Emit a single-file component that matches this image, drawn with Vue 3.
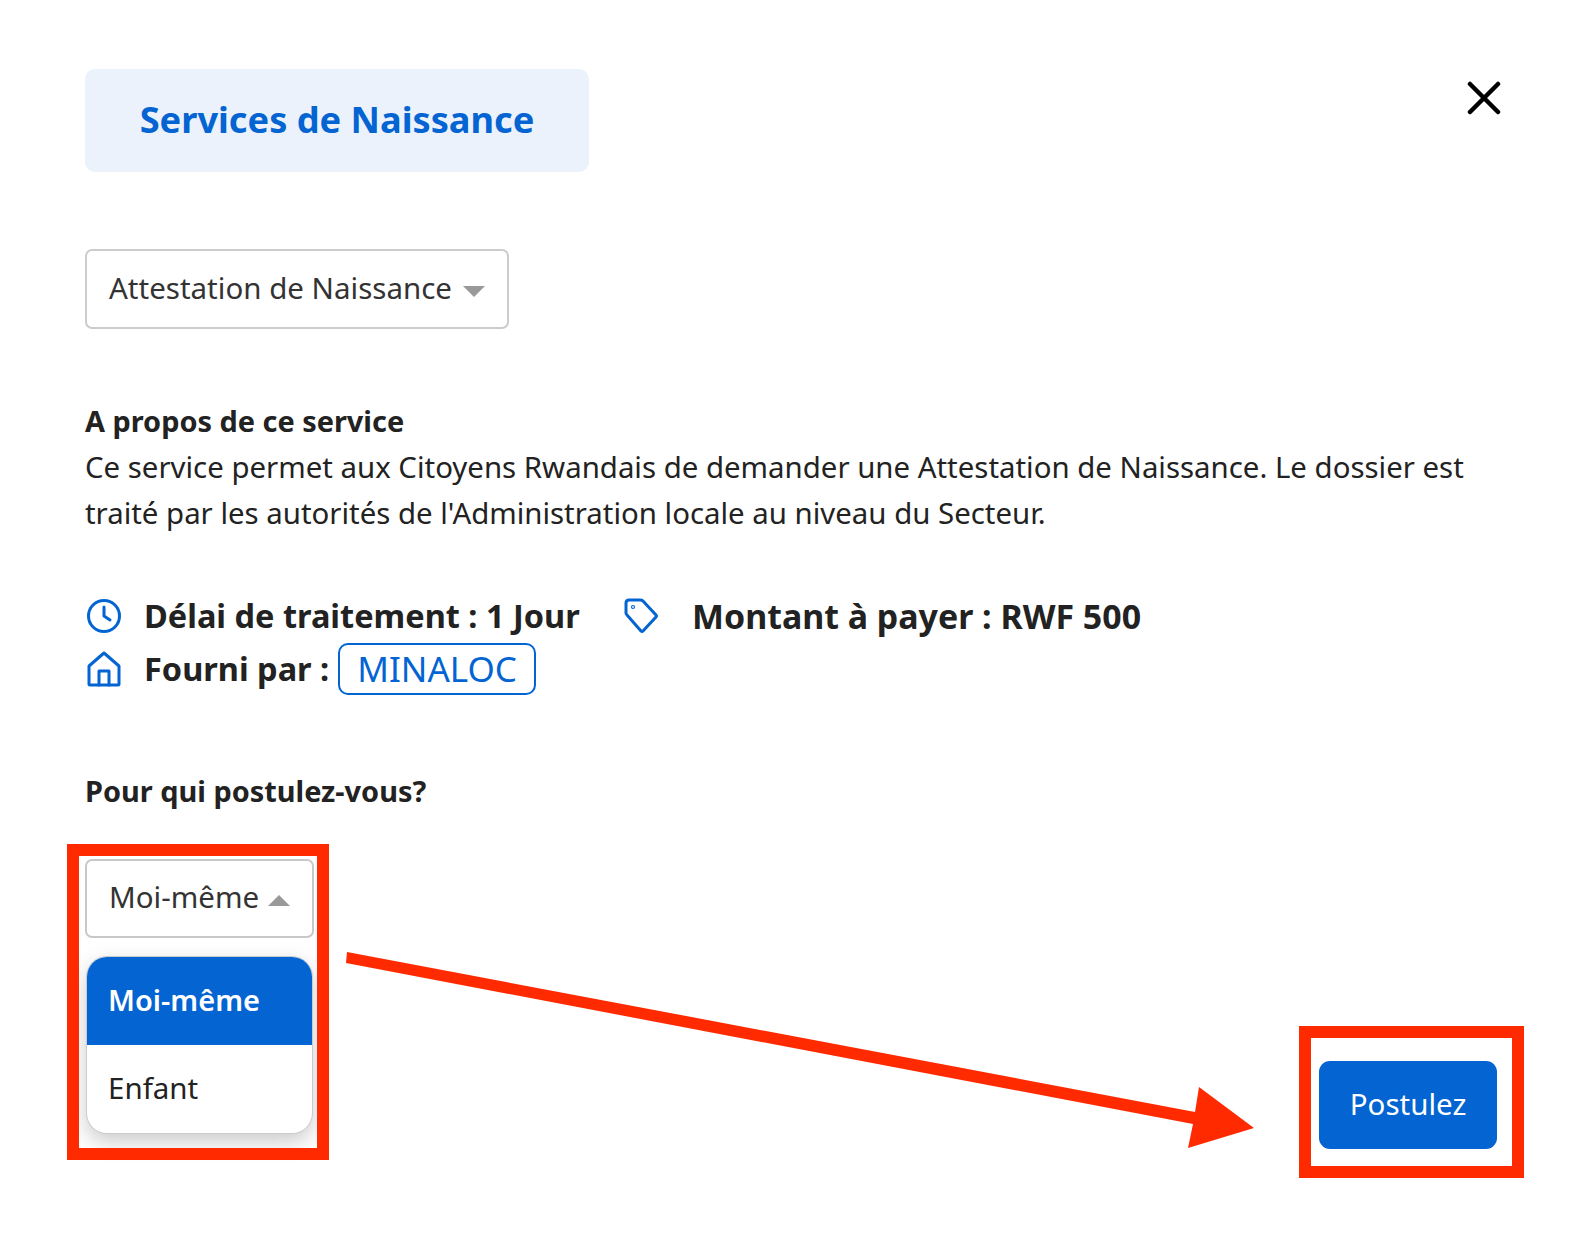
<script setup>
const options = [
  { label: 'Moi-même', active: true },
  { label: 'Enfant', active: false }
]
</script>

<template>
  <main class="modal">
    <header class="top">
      <h1 class="title">Services de Naissance</h1>
      <button class="close" aria-label="Fermer">
        <svg width="34" height="34" viewBox="0 0 34 34">
          <path d="M3 3 L31 31 M31 3 L3 31" stroke="#000" stroke-width="4.5" stroke-linecap="round" />
        </svg>
      </button>
    </header>

    <div class="select service">
      <span>Attestation de Naissance</span>
      <i class="caret down"></i>
    </div>

    <section class="about">
      <h2>A propos de ce service</h2>
      <p>Ce service permet aux Citoyens Rwandais de demander une Attestation de Naissance. Le dossier est traité par les autorités de l'Administration locale au niveau du Secteur.</p>
    </section>

    <section class="meta">
      <div class="meta-row">
        <svg class="ico" viewBox="0 0 36 36" fill="none" stroke="#0364d2" stroke-width="3" stroke-linecap="round" stroke-linejoin="round">
          <circle cx="18" cy="18" r="15.5" />
          <path d="M18 9 V18 L24 22" />
        </svg>
        <span class="meta-text first">Délai de traitement : 1 Jour</span>
        <svg class="ico tag" viewBox="0 0 36 36" fill="none" stroke="#0364d2" stroke-width="3" stroke-linecap="round" stroke-linejoin="round">
          <path d="M3 5 Q3 2 6 2 H17 Q19 2 20 3 L33 17 Q34 18 33 19 L20 33 Q19 34 18 33 L4 17 Q3 16 3 15 Z" />
          <circle cx="10" cy="9" r="0.6" />
        </svg>
        <span class="meta-text amount">Montant à payer : RWF 500</span>
      </div>
      <div class="meta-row">
        <svg class="ico" viewBox="0 0 36 36" fill="none" stroke="#0364d2" stroke-width="3" stroke-linecap="round" stroke-linejoin="round">
          <path d="M3 15 L18 2 L33 15 V33 Q33 34 32 34 H4 Q3 34 3 33 Z" />
          <path d="M13 34 V20 H23 V34" />
        </svg>
        <span class="meta-text">Fourni par :</span>
        <span class="chip">MINALOC</span>
      </div>
    </section>

    <h2 class="question">Pour qui postulez-vous?</h2>

    <div class="bottom">
      <div class="picker">
        <div class="select who">
          <span>Moi-même</span>
          <i class="caret up"></i>
        </div>
        <ul class="menu">
          <li v-for="o in options" :key="o.label" :class="{ active: o.active }">{{ o.label }}</li>
        </ul>
        <div class="mark mark-left"></div>
      </div>
      <div class="submit">
        <button class="apply">Postulez</button>
        <div class="mark mark-right"></div>
      </div>
    </div>

    <svg class="arrow" width="1596" height="1255" viewBox="0 0 1596 1255">
      <path d="M347 952 L1195 1112 L1199 1087 L1254 1128 L1188 1148 L1193 1124 L346 963 Z" fill="#ff2a00" />
    </svg>
  </main>
</template>

<style>
html, body { background: #fff; }
</style>

<style scoped>
.modal {
  position: relative;
  width: 1596px;
  height: 1255px;
  box-sizing: border-box;
  padding: 69px 99px 0 85px;
  font-family: "Noto Sans", "Open Sans", sans-serif;
  color: #222;
  overflow: hidden;
}

.top {
  display: flex;
  justify-content: space-between;
  align-items: flex-start;
}

.title {
  margin: 0;
  width: 504px;
  height: 103px;
  line-height: 100px;
  text-align: center;
  background: #ebf2fc;
  border-radius: 10px;
  color: #0364d2;
  font-size: 36.2px;
  font-weight: 700;
}

.close {
  margin: 12px -4px 0 0;
  padding: 0;
  border: 0;
  background: none;
  width: 34px;
  height: 34px;
}

.select {
  display: flex;
  align-items: center;
  box-sizing: border-box;
  height: 80px;
  padding: 0 22px 4px;
  border: 2px solid #ccc;
  border-radius: 7px;
  font-size: 29.5px;
  color: #333;
  background: #fff;
}

.service {
  margin-top: 77px;
  width: 424px;
  justify-content: space-between;
}

.caret {
  width: 0;
  height: 0;
  border-left: 11px solid transparent;
  border-right: 11px solid transparent;
}

.caret.down { border-top: 11px solid #999; margin-top: 8px; }
.caret.up { border-bottom: 11px solid #999; margin-top: 8px; }

.about {
  margin-top: 69px;
  font-size: 29.4px;
}

.about h2,
.question {
  margin: 0;
  font-size: 28.9px;
  line-height: 46px;
  font-weight: 700;
}

.about p {
  margin: 0;
  line-height: 46px;
  max-width: 1400px;
}

.meta {
  margin-top: 53px;
}

.meta-row {
  display: flex;
  align-items: center;
  height: 53px;
}

.ico {
  width: 36px;
  height: 36px;
  flex: none;
  margin-left: 1px;
}

.meta-text {
  margin-left: 22px;
  font-size: 32.5px;
  font-weight: 700;
  white-space: nowrap;
}

.amount {
  margin-left: 33px;
  font-size: 33.9px;
}

.first {
  width: 436px;
}

.tag {
  margin-left: 43px;
}

.chip {
  margin-left: 9px;
  box-sizing: border-box;
  height: 52px;
  line-height: 47px;
  padding: 0 17px;
  border: 2px solid #0364d2;
  border-radius: 10px;
  color: #0364d2;
  font-size: 35px;
}

.question {
  margin-top: 73px;
}

.bottom {
  margin-top: 45px;
  display: flex;
  justify-content: space-between;
  align-items: flex-start;
}

.picker {
  position: relative;
  width: 229px;
}

.who {
  justify-content: space-between;
  height: 79px;
  border-color: #c8c8c8;
}

.menu {
  list-style: none;
  margin: 19px 2px 0;
  padding: 0;
  border-radius: 20px;
  overflow: hidden;
  background: #fff;
  box-shadow: 0 0 0 1px #ccc, 0 8px 22px rgba(0, 0, 0, 0.22);
  font-size: 29.5px;
}

.menu li {
  height: 88px;
  line-height: 86px;
  padding: 0 21px;
  color: #222;
}

.menu li.active {
  background: #0364d2;
  color: #fff;
  font-size: 29px;
  font-weight: 600;
}

.submit {
  position: relative;
  margin-top: 202px;
}

.apply {
  display: block;
  width: 178px;
  height: 88px;
  padding: 0 0 4px;
  border: 0;
  border-radius: 11px;
  background: #0364d2;
  color: #fff;
  font-family: inherit;
  font-size: 29.5px;
}

.mark {
  position: absolute;
  box-sizing: border-box;
  border: 12px solid #ff2a00;
}

.mark-left {
  left: -18px;
  top: -15px;
  width: 262px;
  height: 316px;
}

.mark-right {
  left: -20px;
  top: -35px;
  width: 225px;
  height: 152px;
}

.arrow {
  position: absolute;
  left: 0;
  top: 0;
  pointer-events: none;
}
</style>
